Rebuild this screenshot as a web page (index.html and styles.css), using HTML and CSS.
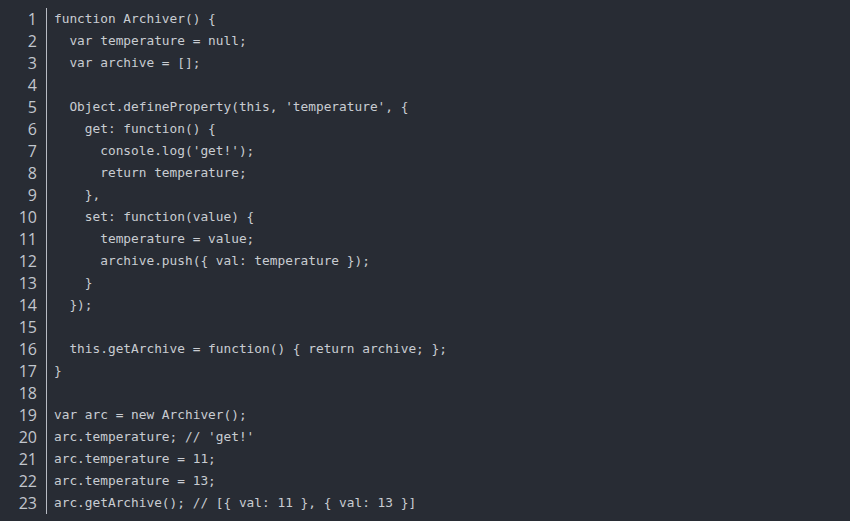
FILE: index.html
```html
<!DOCTYPE html>
<html>
<head>
<meta charset="utf-8">
<link rel="stylesheet" href="styles.css">
</head>
<body>
<div class="editor">
  <div class="gutter">
    <div>1</div><div>2</div><div>3</div><div>4</div><div>5</div><div>6</div><div>7</div><div>8</div><div>9</div><div>10</div><div>11</div><div>12</div><div>13</div><div>14</div><div>15</div><div>16</div><div>17</div><div>18</div><div>19</div><div>20</div><div>21</div><div>22</div><div>23</div>
  </div>
<pre class="code">function Archiver() {
  var temperature = null;
  var archive = [];

  Object.defineProperty(this, 'temperature', {
    get: function() {
      console.log('get!');
      return temperature;
    },
    set: function(value) {
      temperature = value;
      archive.push({ val: temperature });
    }
  });

  this.getArchive = function() { return archive; };
}

var arc = new Archiver();
arc.temperature; // 'get!'
arc.temperature = 11;
arc.temperature = 13;
arc.getArchive(); // [{ val: 11 }, { val: 13 }]</pre>
</div>
</body>
</html>
```
FILE: styles.css
```css
html, body {
  margin: 0;
  padding: 0;
  background: #282c34;
  height: 100%;
}
.editor {
  display: flex;
  padding-top: 8px;
}
.gutter {
  width: 37px;
  padding-right: 9px;
  border-right: 1px solid #b8bcc4;
  text-align: right;
  font-family: "Open Sans", "Noto Sans", sans-serif;
  font-size: 16px;
  line-height: 22px;
  color: #c2c6cd;
}
.code {
  margin: 0;
  padding-left: 7px;
  font-family: "DejaVu Sans Mono", monospace;
  font-size: 12.8px;
  line-height: 22px;
  color: #c9ccd2;
}
```
